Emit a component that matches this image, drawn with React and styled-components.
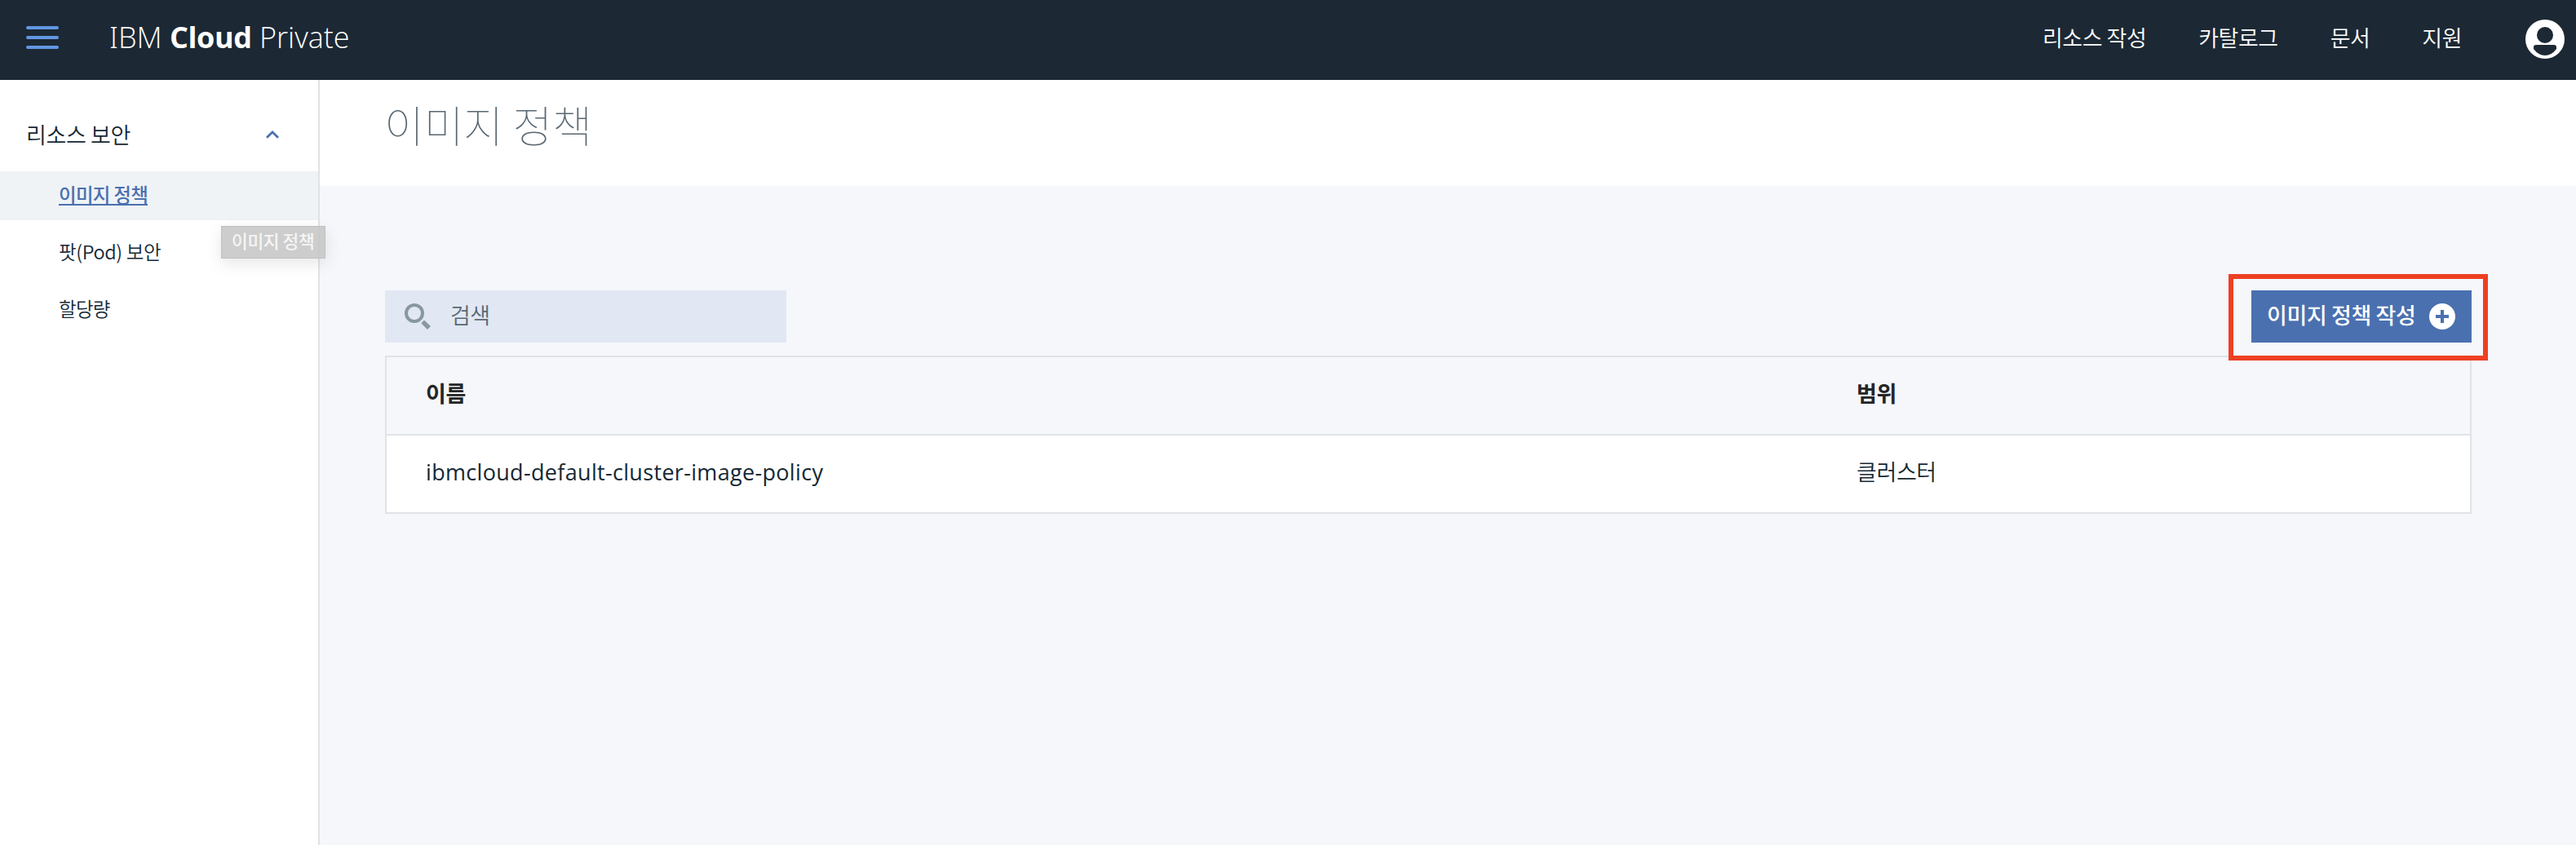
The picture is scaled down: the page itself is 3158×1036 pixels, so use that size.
import React from "react";
import styled, { createGlobalStyle } from "styled-components";

const ink = "#152935";
const line = "#dfe3e6";
const blue = "#4a70af";

const GlobalStyle = createGlobalStyle`
  * { box-sizing: border-box; }
  body {
    margin: 0;
    background: #f5f7fb;
    color: ${ink};
    font-family: "Open Sans", "Noto Sans CJK KR", sans-serif;
  }
  ul { list-style: none; margin: 0; padding: 0; }
  a { color: inherit; text-decoration: none; }
  svg { display: block; flex: none; }
`;

const Page = styled.div`
  display: flex;
  flex-direction: column;
  height: 1036px;
  overflow: hidden;
`;

const Label = styled.span`
  font-family: ${(p) => (p.$latin ? '"Open Sans", "Noto Sans CJK KR", sans-serif' : '"Noto Sans CJK KR", sans-serif')};
  font-size: ${(p) => p.$size}px;
  font-weight: ${(p) => p.$weight || 350};
  letter-spacing: ${(p) => p.$track || 0}px;
  line-height: ${(p) => p.$lh || 40}px;
  padding-bottom: ${(p) => p.$lift || 0}px;
  white-space: nowrap;
`;

const TopBar = styled.header`
  display: flex;
  align-items: flex-start;
  flex: none;
  height: 98px;
  padding: 24px 14px 0 32px;
  background: #1c2834;
  color: #fff;
`;

const MenuButton = styled.button`
  display: flex;
  flex-direction: column;
  gap: 8px;
  width: 40px;
  margin-top: 8px;
  padding: 0;
  border: 0;
  background: none;
`;

const MenuBar = styled.span`
  height: 4px;
  border-radius: 2px;
  background: #6297e3;
`;

const Brand = styled.div`
  width: 320px;
  margin-left: 62px;
  font-family: "Open Sans", sans-serif;
  font-size: 36px;
  font-weight: 300;
  line-height: 44px;
  letter-spacing: 0;
  white-space: nowrap;
  b { font-weight: 700; letter-spacing: -0.4px; }
`;

const SerifI = styled.span`
  font-feature-settings: "ss01", "ss02", "ss03", "salt", "cv08";
`;

const TopNav = styled.nav`
  display: flex;
  margin-left: auto;
  margin-right: 78px;
  gap: 64px;
`;

const Body = styled.div`
  display: flex;
  flex: 1;
`;

const Sidebar = styled.aside`
  position: relative;
  flex: none;
  width: 392px;
  border-right: 2px solid ${line};
  background: #fff;
`;

const Section = styled.div`
  display: flex;
  align-items: center;
  justify-content: space-between;
  height: 112px;
  padding: 22px 48px 0 32px;
`;

const Item = styled.li`
  display: flex;
  align-items: center;
  height: 60px;
  margin-bottom: 10px;
  padding-left: 72px;
  background: ${(p) => (p.$active ? "#eff3f6" : "transparent")};
  color: ${(p) => (p.$active ? blue : ink)};
`;

const Underlined = styled.a`
  display: flex;
  height: 32px;
  margin-bottom: 8px;
  border-bottom: 2px solid ${blue};
`;

const Tooltip = styled.div`
  position: absolute;
  left: 271px;
  top: 179px;
  width: 128px;
  height: 40px;
  padding-left: 12px;
  border: 1px solid #bfc0c1;
  background: rgba(198, 198, 198, 0.88);
  box-shadow: 0 6px 20px rgba(0, 0, 0, 0.1);
  color: #f5f5f5;
  display: flex;
  align-items: center;
`;

const Main = styled.main`
  flex: 1;
`;

const PageHeader = styled.div`
  height: 130px;
  padding: 14px 0 0 79px;
  background: #fff;
  color: #5a6872;
`;

const Content = styled.div`
  padding: 128px 128px 0 80px;
`;

const Toolbar = styled.div`
  display: flex;
  justify-content: space-between;
  height: 64px;
  margin-bottom: 16px;
`;

const Search = styled.div`
  display: flex;
  align-items: center;
  width: 492px;
  padding-left: 24px;
  gap: 24px;
  background: #e1e8f3;
  color: #5a6872;
`;

const CreateButton = styled.button`
  position: relative;
  display: flex;
  align-items: center;
  justify-content: space-between;
  width: 270px;
  padding: 0 20px 0 19px;
  border: 0;
  background: ${blue};
  color: #fff;
`;

const Highlight = styled.span`
  position: absolute;
  inset: -20px -20px -22px -28px;
  border: 6px solid #ee4023;
`;

const Table = styled.div`
  border: 2px solid ${line};
`;

const Row = styled.div`
  display: grid;
  grid-template-columns: 1754px 1fr;
  align-items: center;
  height: ${(p) => (p.$head ? 96 : 94)}px;
  padding-left: 48px;
  border-bottom: ${(p) => (p.$head ? `2px solid ${line}` : "0")};
  background: ${(p) => (p.$head ? "transparent" : "#fff")};
  color: ${(p) => (p.$head ? "#252525" : ink)};
`;

const links = [
  { text: "리소스 작성" },
  { text: "카탈로그" },
  { text: "문서" },
  { text: "지원" },
];

const UserIcon = () => (
  <svg width="48" height="48" viewBox="0 0 48 48">
    <circle cx="24" cy="24" r="24" fill="#fff" />
    <circle cx="24" cy="19" r="10" fill="#1c2834" />
    <path d="M10 36V34Q10 31 13 31H35Q38 31 38 34V36Q32 44 24 44T10 36Z" fill="#1c2834" />
  </svg>
);

const SearchIcon = () => (
  <svg width="32" height="32" viewBox="0 0 32 32" fill="none">
    <circle cx="12" cy="12" r="10" stroke="#8897a2" strokeWidth="4" />
    <path d="M24 20.5L32 28L28 32L20.3 24.3Z" fill="#8897a2" />
  </svg>
);

const PlusIcon = () => (
  <svg width="32" height="32" viewBox="0 0 32 32">
    <circle cx="16" cy="16" r="16" fill="#fff" />
    <path d="M14 8h4v6h6v4h-6v6h-4v-6H8v-4h6z" fill={blue} />
  </svg>
);

const ChevronUp = () => (
  <svg width="16" height="10" viewBox="0 0 16 10" fill="none">
    <path d="M1 8.8L8 2L15 8.8" stroke={blue} strokeWidth="2.8" />
  </svg>
);

export default function App() {
  return (
    <Page>
      <GlobalStyle />
      <TopBar>
        <MenuButton aria-label="menu">
          <MenuBar />
          <MenuBar />
          <MenuBar />
        </MenuButton>
        <Brand>
          <SerifI>I</SerifI>BM <b>Cloud</b> Private
        </Brand>
        <TopNav>
          {links.map((l) => (
            <Label as="a" key={l.text} $size={27} $track={-0.5} $lh={44}>
              {l.text}
            </Label>
          ))}
        </TopNav>
        <UserIcon />
      </TopBar>
      <Body>
        <Sidebar>
          <Section>
            <Label $size={27} $track={-0.4}>리소스 보안</Label>
            <ChevronUp />
          </Section>
          <ul>
            <Item $active>
              <Underlined href="#">
                <Label $size={23.5} $weight={500} $track={-0.7} $lh={36}>이미지 정책</Label>
              </Underlined>
            </Item>
            <Item>
              <Label $size={23.5} $track={-0.35} $lift={4}>팟(Pod) 보안</Label>
            </Item>
            <Item>
              <Label $size={23.5} $track={-0.7} $lift={4}>할당량</Label>
            </Item>
          </ul>
          <Tooltip>
            <Label $size={21.5} $weight={500} $track={-0.4} $lh={34} $lift={4}>이미지 정책</Label>
          </Tooltip>
        </Sidebar>
        <Main>
          <PageHeader>
            <Label $size={53} $weight={100} $track={-0.1} $lh={80}>이미지 정책</Label>
          </PageHeader>
          <Content>
            <Toolbar>
              <Search>
                <SearchIcon />
                <Label $size={27} $track={-0.5} $lift={4}>검색</Label>
              </Search>
              <CreateButton>
                <Label $size={27} $weight={500} $track={-0.4} $lift={4}>이미지 정책 작성</Label>
                <PlusIcon />
                <Highlight />
              </CreateButton>
            </Toolbar>
            <Table>
              <Row $head>
                <Label $size={27} $weight={700} $track={-0.4} $lift={6}>이름</Label>
                <Label $size={27} $weight={700} $track={-0.4} $lift={6}>범위</Label>
              </Row>
              <Row>
                <Label $latin $weight={400} $size={27} $track={0.32} $lift={4}>ibmcloud-default-cluster-image-policy</Label>
                <Label $size={27} $track={-0.4} $lift={6}>클러스터</Label>
              </Row>
            </Table>
          </Content>
        </Main>
      </Body>
    </Page>
  );
}
